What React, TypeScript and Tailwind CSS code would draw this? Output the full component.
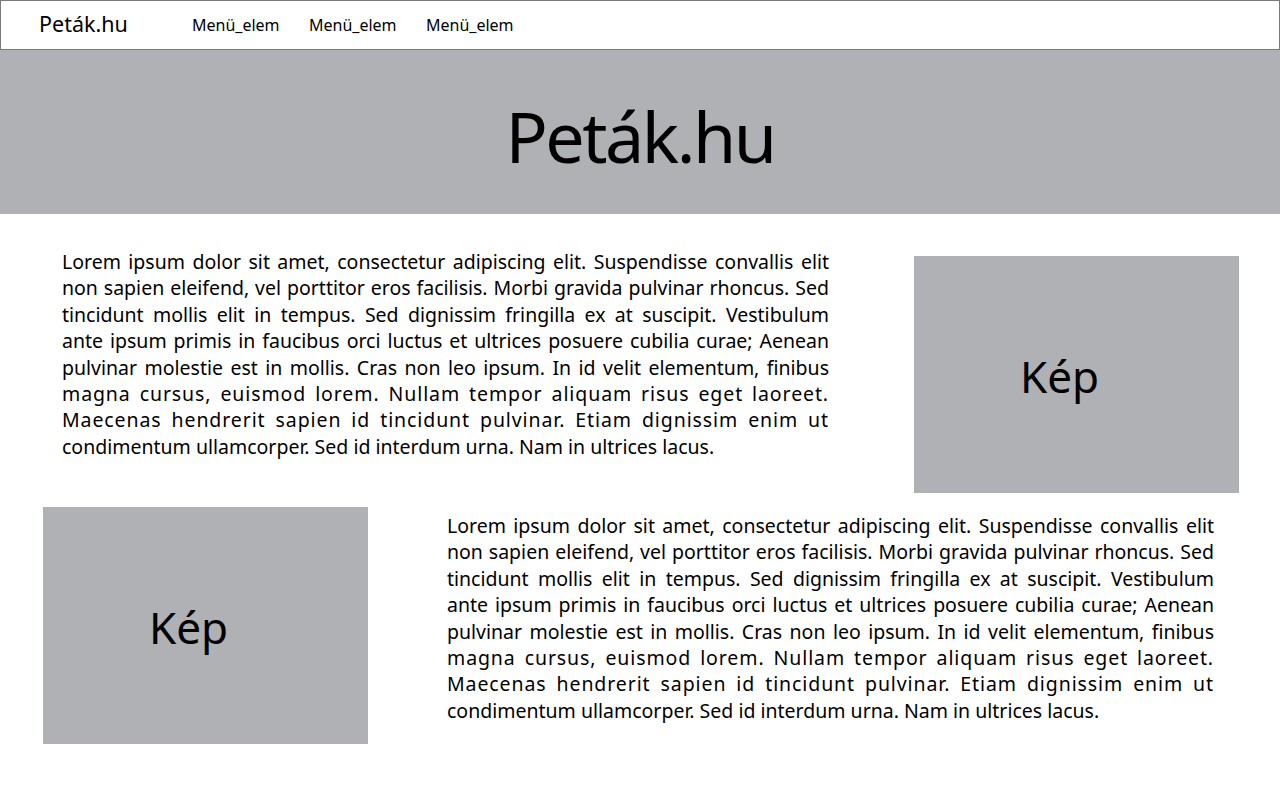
const lines = [
  "Lorem ipsum dolor sit amet, consectetur adipiscing elit. Suspendisse convallis elit",
  "non sapien eleifend, vel porttitor eros facilisis. Morbi gravida pulvinar rhoncus. Sed",
  "tincidunt mollis elit in tempus. Sed dignissim fringilla ex at suscipit. Vestibulum",
  "ante ipsum primis in faucibus orci luctus et ultrices posuere cubilia curae; Aenean",
  "pulvinar molestie est in mollis. Cras non leo ipsum. In id velit elementum, finibus",
  "magna cursus, euismod lorem. Nullam tempor aliquam risus eget laoreet.",
  "Maecenas hendrerit sapien id tincidunt pulvinar. Etiam dignissim enim ut",
  "condimentum ullamcorper. Sed id interdum urna. Nam in ultrices lacus.",
];

const menu = ["Menü_elem", "Menü_elem", "Menü_elem"];

const Text = () => (
  <div className="w-[767px] text-[19.5px] leading-[26.4px] text-black">
    {lines.map((line, i) => (
      <div
        key={i}
        className={
          i === lines.length - 1
            ? "text-left whitespace-nowrap"
            : i === 5 || i === 6
            ? "text-justify [text-align-last:justify] whitespace-nowrap tracking-[0.9px]"
            : "text-justify [text-align-last:justify] whitespace-nowrap"
        }
      >
        {line}
      </div>
    ))}
  </div>
);

const Kep = () => (
  <div className="w-[325px] h-[237px] bg-[#b0b1b5] flex items-center justify-center pr-[34px] pt-[3px]">
    <span className="text-[44px] text-black">Kép</span>
  </div>
);

export default function App() {
  return (
    <div
      className="w-[1280px] min-h-[793px] bg-white"
      style={{ fontFamily: '"Noto Sans", "Open Sans", sans-serif' }}
    >
      {/* Nav */}
      <div className="h-[50px] border border-[#7a7a7a] flex items-center pl-[38px]">
        <p className="text-[21.5px] w-[153px] -mt-[2px]">Peták.hu</p>
        <div className="flex gap-[29px]">
          {menu.map((item, index) => (
            <p key={index} className="text-[16px] w-[88px] -mt-[1px]">
              {item}
            </p>
          ))}
        </div>
      </div>

      {/* Hero */}
      <div className="h-[164px] bg-[#b0b1b5] flex items-center justify-center">
        <p className="text-[70px] tracking-[-2.5px] leading-none mt-[8px]">Peták.hu</p>
      </div>

      {/* Row 1 */}
      <div className="flex items-start pt-[35px] pl-[62px]">
        <Text />
        <div className="ml-[85px] mt-[7px]">
          <Kep />
        </div>
      </div>

      {/* Row 2 */}
      <div className="flex items-start pt-[14px] pl-[43px]">
        <Kep />
        <div className="ml-[79px] mt-[6px]">
          <Text />
        </div>
      </div>
    </div>
  );
}
